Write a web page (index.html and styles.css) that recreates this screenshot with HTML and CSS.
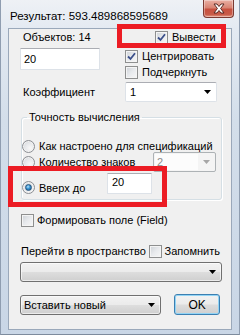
FILE: index.html
```html
<!DOCTYPE html>
<html lang="ru">
<head>
<meta charset="utf-8">
<title>Результат</title>
<link rel="stylesheet" href="styles.css">
</head>
<body>
<div class="window">
  <div class="titlebar">
    <span class="title">Результат: 593.489868595689</span>
    <div class="close">
      <svg width="14" height="11" viewBox="0 0 14 11"><path d="M2 1 H5 L7 3.5 L9 1 H12 L8.6 5.5 L12 10 H9 L7 7.5 L5 10 H2 L5.4 5.5 Z" fill="#fff" stroke="#5a2a24" stroke-width="1" stroke-linejoin="round"/></svg>
    </div>
  </div>
  <div class="client">
    <div class="top">
      <div class="col-left">
        <div class="objects">Объектов: 14</div>
        <div class="textbox tb-main">20</div>
      </div>
      <div class="col-right">
        <div class="check out"><span class="cb"><svg width="9" height="9" viewBox="0 0 9 9"><path d="M1 4.5 L3.5 7 L8 1.2" fill="none" stroke="#3b4f8a" stroke-width="1.8"/></svg></span><span>Вывести</span></div>
        <div class="check"><span class="cb"><svg width="9" height="9" viewBox="0 0 9 9"><path d="M1 4.5 L3.5 7 L8 1.2" fill="none" stroke="#3b4f8a" stroke-width="1.8"/></svg></span><span>Центрировать</span></div>
        <div class="check"><span class="cb"></span><span>Подчеркнуть</span></div>
      </div>
    </div>
    <div class="coef">
      <span class="coef-label">Коэффициент</span>
      <div class="combo edit coef-combo"><span>1</span><svg class="arrow" width="7" height="4" viewBox="0 0 7 4"><path d="M0 0 H7 L3.5 4 Z" fill="#000"/></svg></div>
    </div>
    <fieldset class="group">
      <legend>Точность вычисления</legend>
      <div class="radio-row r1"><span class="rb"></span><span>Как настроено для спецификаций</span></div>
      <div class="radio-row r2"><span class="rb"></span><span>Количество знаков</span>
        <div class="combo disabled digits"><span class="val">2</span><span class="dd"><svg width="7" height="4" viewBox="0 0 7 4"><path d="M0 0 H7 L3.5 4 Z" fill="#a6a6a6"/></svg></span></div>
      </div>
      <div class="radio-row r3"><span class="r3-label"><span class="rb on"><span class="dot"></span></span><span>Вверх до</span></span>
        <div class="textbox tb-up">20</div>
      </div>
    </fieldset>
    <div class="check field"><span class="cb"></span><span>Формировать поле (Field)</span></div>
    <div class="goto">
      <span class="goto-label">Перейти в пространство</span>
      <div class="check remember"><span class="cb"></span><span>Запомнить</span></div>
    </div>
    <div class="combo btn wide"><span></span><svg class="arrow" width="7" height="4" viewBox="0 0 7 4"><path d="M0 0 H7 L3.5 4 Z" fill="#000"/></svg></div>
    <div class="bottom">
      <div class="combo btn insert"><span>Вставить новый</span><svg class="arrow" width="7" height="4" viewBox="0 0 7 4"><path d="M0 0 H7 L3.5 4 Z" fill="#000"/></svg></div>
      <div class="ok">OK</div>
    </div>
  </div>
  <div class="hl hl1"></div>
  <div class="hl hl2"></div>
</div>
</body>
</html>
```
FILE: styles.css
```css
* { box-sizing: border-box; }
html, body { margin: 0; padding: 0; }
body {
  width: 240px;
  height: 335px;
  overflow: hidden;
  font-family: "Liberation Sans", Arial, sans-serif;
  font-size: 11px;
  color: #000;
  background: #fff;
}
.window {
  position: relative;
  width: 240px;
  height: 335px;
  padding: 0 7px 4px 7px;
  background: linear-gradient(180deg, #eef1f5 0px, #e4eaf2 28px, #d3deea 120px, #c9d6e6 335px);
  border-left: 1px solid #8f9db0;
  border-right: 1px solid #8f9db0;
  border-bottom: 1px solid #7d8b9d;
  display: flex;
  flex-direction: column;
}
.titlebar {
  height: 28px;
  position: relative;
  display: flex;
  align-items: center;
  margin-left: -6px;
}
.title {
  padding-left: 8px;
  padding-top: 3px;
  white-space: nowrap;
  font-size: 11.5px;
}
.close {
  position: absolute;
  right: -2px;
  top: 0;
  width: 31px;
  height: 18px;
  border: 1px solid #7b3a32;
  border-top: none;
  border-radius: 0 0 4px 4px;
  background: linear-gradient(180deg, #eab0a4 0%, #d98473 45%, #c7503f 55%, #c85b48 85%, #e59a86 100%);
  display: flex;
  align-items: center;
  justify-content: center;
  box-shadow: inset 0 0 0 1px rgba(255,255,255,0.35);
}
.client {
  flex: 1;
  background: #f0f0f0;
  border: 1px solid #9aa8ba;
  padding: 0 11px 0 11px;
}
.top {
  display: grid;
  grid-template-columns: 81px 1fr;
  column-gap: 24px;
}
.objects {
  padding-left: 3px;
  height: 16px;
  line-height: 16px;
}
.textbox {
  background: #fff;
  border: 1px solid #dde2e8;
  border-top-color: #abadb3;
  border-radius: 1px;
  padding-left: 2px;
}
.tb-main {
  margin-top: 3px;
  width: 80px;
  height: 22px;
  line-height: 20px;
  padding-left: 3px;
}
.check {
  display: flex;
  align-items: center;
  height: 16px;
  gap: 4px;
}
.col-right .check:nth-child(2) { margin-top: 3px; }
.check.out { padding-left: 30px; }
.cb {
  width: 13px;
  height: 13px;
  flex: none;
  border: 1px solid #8e8f8f;
  background: linear-gradient(135deg, #cdd1d6 0%, #e8eaed 50%, #f7f7f7 100%);
  box-shadow: inset 0 0 0 1px #f4f4f4;
  display: flex;
  align-items: center;
  justify-content: center;
}
.coef {
  margin-top: 2px;
  display: grid;
  grid-template-columns: 81px 92px;
  column-gap: 24px;
  align-items: center;
  height: 20px;
}
.coef-label { padding-left: 3px; }
.combo {
  height: 20px;
  display: flex;
  align-items: center;
  justify-content: space-between;
  border-radius: 2px;
}
.combo.edit {
  background: #fff;
  border: 1px solid #dde2e8;
  border-top-color: #abadb3;
  padding: 0 5px 0 4px;
}
.arrow { flex: none; }
.group {
  margin: 8px 0 0 1px;
  width: 201px;
  padding: 15px 0 5px 0;
  border: 1px solid #d5dfe5;
  border-radius: 3px;
  box-shadow: inset 1px 1px 0 #fff, 1px 1px 0 #fff;
  min-width: 0;
}
.group legend {
  margin-left: 5px;
  padding: 0 2px;
  line-height: 14px;
  height: 14px;
}
.radio-row {
  display: flex;
  align-items: center;
  gap: 4px;
}
.r1 { height: 14px; }
.r2 { height: 20px; margin-top: -1px; padding-right: 5px; }
.r2 .digits { margin-left: auto; }
.r3 { height: 21px; margin-top: 1px; align-items: flex-start; }
.r3-label {
  display: flex;
  align-items: center;
  gap: 4px;
  width: 81px;
  height: 13px;
  margin-top: 8px;
}
.rb {
  width: 13px;
  height: 13px;
  flex: none;
  border-radius: 50%;
  border: 1px solid #8c8f94;
  background: radial-gradient(circle at 65% 65%, #f8f8f8 0%, #e6e8eb 50%, #c9cdd2 100%);
  box-shadow: inset 0 0 0 1px #f2f2f2;
  display: flex;
  align-items: center;
  justify-content: center;
}
.rb .dot {
  width: 7px;
  height: 7px;
  border-radius: 50%;
  background: radial-gradient(circle at 40% 35%, #b9e3fb 0%, #3f9ad6 40%, #0f4f86 100%);
  border: 1px solid #27557e;
}
.combo.disabled {
  width: 63px;
  background: #f4f4f4;
  border: 1px solid #adb2b5;
  color: #8d8d8d;
  padding: 0;
  align-items: stretch;
}
.combo.disabled .val {
  flex: 1;
  margin: 1px 0 1px 1px;
  background: #fcfcfc;
  padding-left: 2px;
  line-height: 16px;
}
.combo.disabled .dd {
  width: 17px;
  display: flex;
  align-items: center;
  justify-content: center;
}
.tb-up {
  width: 45px;
  height: 21px;
  line-height: 17px;
  padding-left: 4px;
}
.field {
  margin-top: 12px;
  padding-left: 1px;
  gap: 3px;
}
.goto {
  margin-top: 15px;
  height: 16px;
  display: flex;
  align-items: center;
}
.goto-label {
  width: 130px;
  padding-left: 1px;
}
.remember { gap: 3px; }
.combo.btn {
  border: 1px solid #707070;
  border-radius: 3px;
  background: linear-gradient(180deg, #f2f2f2 0%, #ebebeb 48%, #dddddd 52%, #cfcfcf 100%);
  box-shadow: inset 0 0 0 1px rgba(255,255,255,0.6);
  padding: 0 4px 0 3px;
}
.wide {
  margin-top: 3px;
  width: 202px;
  padding-right: 5px !important;
}
.bottom {
  margin-top: 12px;
  display: flex;
  align-items: flex-start;
  gap: 13px;
}
.insert {
  margin-top: 1px;
  width: 142px;
  padding-right: 5px !important;
}
.ok {
  width: 46px;
  height: 21px;
  border: 1px solid #3c7fb1;
  border-radius: 3px;
  background: linear-gradient(180deg, #f2f2f2 0%, #ebebeb 48%, #dddddd 52%, #cfcfcf 100%);
  box-shadow: inset 0 0 0 1px #92d4f5;
  display: flex;
  align-items: center;
  justify-content: center;
  font-size: 12px;
}
.hl {
  position: absolute;
  border: 5px solid #ec1c24;
  pointer-events: none;
}
.hl1 { left: 116px; top: 24px; width: 109px; height: 24px; }
.hl2 { left: 7px; top: 166px; width: 159px; height: 41px; }
```
